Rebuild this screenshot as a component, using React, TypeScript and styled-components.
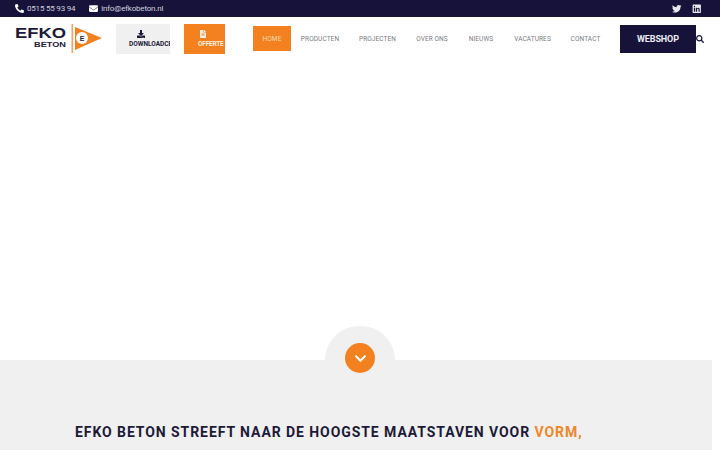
import React from "react";
import styled, { createGlobalStyle } from "styled-components";
import { FaPhone, FaEnvelope, FaTwitter, FaLinkedin, FaDownload, FaFileAlt, FaSearch, FaChevronDown } from "react-icons/fa";

const Global = createGlobalStyle`
  html, body { margin: 0; padding: 0; background: #fff; overflow: hidden; }
  body { font-family: "Roboto", "Liberation Sans", sans-serif; width: 720px; height: 450px; }
`;

const TopBar = styled.div`
  height: 17px;
  background: #16123a;
  display: flex;
  align-items: center;
  justify-content: space-between;
  padding: 0 19px 0 15px;
  color: #d0cfda;
  font-size: 8px;
  font-weight: 400;
`;
const TopGroup = styled.div<{ $gap: number }>`
  display: flex;
  align-items: center;
  gap: ${(p) => p.$gap}px;
`;
const Contact = styled.span`
  display: flex;
  align-items: center;
  gap: 3px;
  letter-spacing: -0.2px;
  svg { color: #fff; font-size: 9px; }
`;
const Social = styled.span`
  display: flex;
  color: #e8e8ee;
  font-size: 9.5px;
`;

const Header = styled.header`
  height: 43px;
  display: flex;
  align-items: flex-start;
  background: #fff;
  padding-left: 15px;
`;
const Logo = styled.svg`
  width: 88px;
  height: 32px;
  margin-top: 6px;
  flex: none;
`;
const ActionButton = styled.a<{ $bg: string; $fg: string; $w: number; $ml: number }>`
  width: ${(p) => p.$w}px;
  height: 30px;
  margin-top: 7px;
  margin-left: ${(p) => p.$ml}px;
  background: ${(p) => p.$bg};
  color: ${(p) => p.$fg};
  flex: none;
  display: flex;
  flex-direction: column;
  overflow: hidden;
  font-size: 6.5px;
  line-height: 8px;
  font-weight: 700;
  padding-top: 6px;
  box-sizing: border-box;
  white-space: nowrap;
  svg { font-size: 8px; margin-bottom: 2px; flex: none; }
`;
const ButtonIcon = styled.span<{ $x: number }>`
  display: flex;
  margin-left: ${(p) => p.$x}px;
`;
const ButtonLabel = styled.span<{ $x: number; $tight?: boolean }>`
  margin-left: ${(p) => p.$x}px;
  letter-spacing: ${(p) => (p.$tight ? "-0.2px" : "0")};
`;
const Nav = styled.nav`
  display: flex;
  align-items: center;
  margin-left: 28px;
  margin-top: 9px;
  height: 25px;
`;
const NavItem = styled.a<{ $active?: boolean; $w: number }>`
  width: ${(p) => p.$w}px;
  height: 25px;
  flex: none;
  display: flex;
  align-items: center;
  justify-content: center;
  font-size: 6.5px;
  font-weight: 400;
  letter-spacing: 0.1px;
  color: ${(p) => (p.$active ? "#fbd9b5" : "#7c7c82")};
  background: ${(p) => (p.$active ? "#f38120" : "transparent")};
`;
const Webshop = styled.a`
  width: 76px;
  height: 28px;
  margin-left: 10px;
  margin-top: 8px;
  flex: none;
  background: #16123a;
  color: #ededf2;
  display: flex;
  align-items: center;
  justify-content: center;
  font-size: 9px;
  font-weight: 700;
  letter-spacing: -0.1px;
`;
const SearchButton = styled.span`
  display: flex;
  margin: 18px 0 0 0;
  color: #16123a;
  font-size: 8px;
`;

const Hero = styled.div`
  height: 300px;
`;
const Band = styled.section`
  position: relative;
  width: 712px;
  height: 90px;
  background: #f0f0f0;
`;
const Dome = styled.div`
  position: absolute;
  left: 325px;
  top: -34px;
  width: 70px;
  height: 34px;
  background: #f0f0f0;
  border-radius: 35px 35px 0 0;
`;
const ScrollButton = styled.a`
  position: absolute;
  left: 345px;
  top: -17px;
  width: 30px;
  height: 30px;
  border-radius: 50%;
  background: #f38120;
  color: #fff;
  display: flex;
  align-items: center;
  justify-content: center;
  font-size: 13px;
`;
const Title = styled.h1`
  margin: 0;
  padding: 63px 0 0 75px;
  font-size: 14px;
  line-height: 18px;
  font-weight: 700;
  letter-spacing: 0.93px;
  color: #1c1a38;
  white-space: nowrap;
`;
const Accent = styled.span`
  color: #f0862a;
`;

const navItems: [string, number][] = [
  ["HOME", 38], ["PRODUCTEN", 58], ["PROJECTEN", 57], ["OVER ONS", 52],
  ["NIEUWS", 46], ["VACATURES", 57], ["CONTACT", 49],
];

export default function App() {
  return (
    <>
      <Global />
      <TopBar>
        <TopGroup $gap={14}>
          <Contact><FaPhone style={{ transform: "scaleX(-1)" }} />0515 55 93 94</Contact>
          <Contact><FaEnvelope />info@efkobeton.nl</Contact>
        </TopGroup>
        <TopGroup $gap={10}>
          <Social><FaTwitter /></Social>
          <Social><FaLinkedin /></Social>
        </TopGroup>
      </TopBar>
      <Header>
        <Logo viewBox="0 0 88 32" aria-label="Efko Beton">
          <text x="0" y="15" fontFamily="Liberation Sans, sans-serif" fontWeight="700" fontSize="14" fill="#1c1a38" textLength="51" lengthAdjust="spacingAndGlyphs">EFKO</text>
          <text x="19" y="24" fontFamily="Liberation Sans, sans-serif" fontWeight="700" fontSize="6.5" fill="#1c1a38" textLength="32" lengthAdjust="spacingAndGlyphs">BETON</text>
          <rect x="56.5" y="1" width="1.6" height="29" fill="#e9a468" />
          <path d="M60 4 L87 15 L60 27 Z" fill="#f38120" />
          <circle cx="67" cy="15" r="6" fill="#fff" />
          <text x="67" y="17.5" textAnchor="middle" fontFamily="Liberation Sans, sans-serif" fontWeight="700" fontSize="7" fill="#1c1a38">E</text>
        </Logo>
        <ActionButton $bg="#f0f0f0" $fg="#1c1a38" $w={54} $ml={13}>
          <ButtonIcon $x={21}><FaDownload /></ButtonIcon>
          <ButtonLabel $x={13}>DOWNLOADCE</ButtonLabel>
        </ActionButton>
        <ActionButton $bg="#f38120" $fg="#fdeedd" $w={41} $ml={14}>
          <ButtonIcon $x={15}><FaFileAlt /></ButtonIcon>
          <ButtonLabel $x={14} $tight>OFFERTE</ButtonLabel>
        </ActionButton>
        <Nav>
          {navItems.map(([label, w], i) => (
            <NavItem key={label} $w={w} $active={i === 0}>{label}</NavItem>
          ))}
        </Nav>
        <Webshop>WEBSHOP</Webshop>
        <SearchButton><FaSearch /></SearchButton>
      </Header>
      <Hero />
      <Band>
        <Dome />
        <ScrollButton><FaChevronDown /></ScrollButton>
        <Title>EFKO BETON STREEFT NAAR DE HOOGSTE MAATSTAVEN VOOR <Accent>VORM,</Accent></Title>
      </Band>
    </>
  );
}
